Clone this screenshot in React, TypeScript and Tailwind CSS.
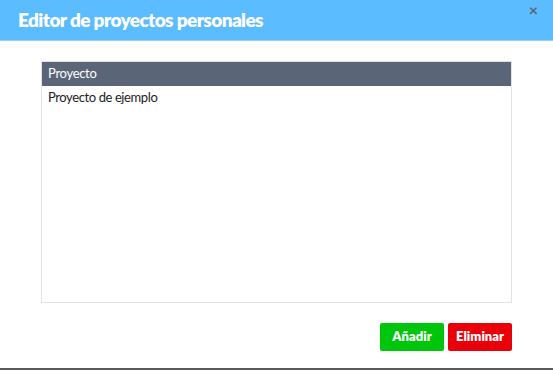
import React from 'react';

const projects = ['Proyecto de ejemplo'];

const App: React.FC = () => {
  return (
    <div className="w-[553px] h-[370px] bg-white flex flex-col font-['Lato',sans-serif] overflow-hidden">
      <div className="h-[41px] bg-[#5bbcff] border-b border-[#8fd0ff] flex items-center justify-between pl-[18px] pr-[15px]">
        <h1 className="text-white font-extrabold text-[19px] tracking-[-0.6px]">Editor de proyectos personales</h1>
        <button className="self-start mt-[2px] text-[#5a6478] text-[16px] font-bold leading-none">×</button>
      </div>

      <div className="flex-1 flex flex-col px-[41px] pt-[20px]">
        <div className="h-[242px] border border-[#e3e3e3] flex flex-col">
          <div className="h-[24px] bg-[#5a6578] text-white text-[13px] tracking-[-0.3px] px-[6px] flex items-center">Proyecto</div>
          {projects.map(p => (
            <div key={p} className="text-[#222] text-[13px] tracking-[-0.4px] px-[6px] pt-[2px]">{p}</div>
          ))}
        </div>

        <div className="flex justify-end gap-[4px] mt-[20px]">
          <button className="w-[64px] h-[28px] rounded-[2px] bg-[#00c60b] text-white font-extrabold text-[13px]">Añadir</button>
          <button className="w-[64px] h-[28px] rounded-[2px] bg-[#e8000b] text-white font-extrabold text-[13px]">Eliminar</button>
        </div>
      </div>

      <div className="h-[2px] bg-[#5a5a5a]" />
    </div>
  );
};

export default App;
